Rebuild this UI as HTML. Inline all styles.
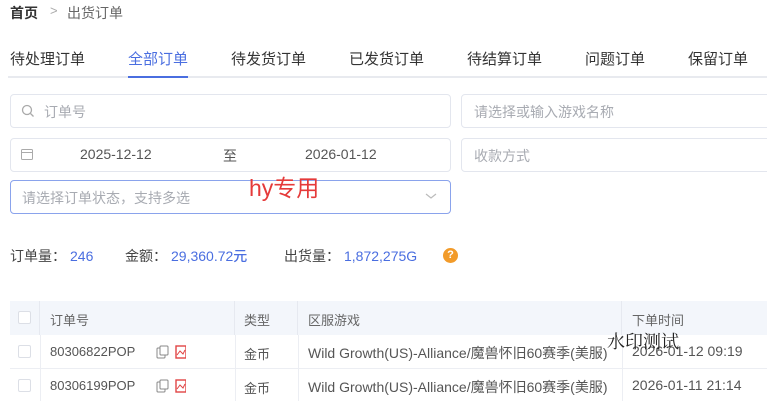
<!DOCTYPE html>
<html><head><meta charset="utf-8"><style>
*{margin:0;padding:0;box-sizing:border-box}
body{width:767px;height:401px;overflow:hidden;background:#fff;font-family:"Liberation Sans","Noto Sans CJK SC",sans-serif;color:#333;position:relative}
.a{position:absolute;white-space:nowrap}
.inp{position:absolute;border:1px solid #e3e6ee;border-radius:4px;height:34px;background:#fff}
.ph{color:#a8abb2;font-size:14px}
.tab{position:absolute;top:48px;font-size:15px;color:#333}
.th{position:absolute;top:301px;height:34px;background:#f3f6fb;border-right:1px solid #e6e9f0}
.td{font-size:13px;color:#555}
.cb{position:absolute;width:13px;height:13px;border:1px solid #dcdfe6;border-radius:2px;background:#fff}
.st{font-size:14px;color:#444;top:246px}
.st span{color:#4a6ee0;font-weight:500;margin-left:4px}
</style></head><body>
<div class="a" style="left:10px;top:3px;font-size:14px;font-weight:bold;color:#333">首页</div>
<div class="a" style="left:50px;top:3px;font-size:13px;color:#aaa">&gt;</div>
<div class="a" style="left:67px;top:3px;font-size:14px;color:#666">出货订单</div>

<div class="a" style="left:8px;top:76px;width:759px;height:2px;background:#e8eaef"></div>
<div class="tab" style="left:10px">待处理订单</div>
<div class="tab" style="left:128px;color:#4a6ee0">全部订单</div>
<div class="a" style="left:128px;top:76px;width:60px;height:2px;background:#4a6ee0"></div>
<div class="tab" style="left:231px">待发货订单</div>
<div class="tab" style="left:349px">已发货订单</div>
<div class="tab" style="left:467px">待结算订单</div>
<div class="tab" style="left:585px">问题订单</div>
<div class="tab" style="left:688px">保留订单</div>

<div class="inp" style="left:10px;top:94px;width:441px"></div>
<svg class="a" style="left:21px;top:104px" width="14" height="14"><circle cx="6" cy="6" r="4.5" fill="none" stroke="#aaa" stroke-width="1.3"/><line x1="9.5" y1="9.5" x2="12.5" y2="12.5" stroke="#aaa" stroke-width="1.3"/></svg>
<div class="a ph" style="left:44px;top:102px">订单号</div>
<div class="inp" style="left:461px;top:94px;width:320px"></div>
<div class="a ph" style="left:474px;top:102px">请选择或输入游戏名称</div>

<div class="inp" style="left:10px;top:138px;width:441px"></div>
<svg class="a" style="left:20px;top:147px" width="14" height="14"><rect x="1.5" y="2.5" width="11" height="10" rx="1" fill="none" stroke="#aaa"/><line x1="1.5" y1="5.5" x2="12.5" y2="5.5" stroke="#aaa"/></svg>
<div class="a" style="left:80px;top:146px;font-size:14px;color:#555">2025-12-12</div>
<div class="a" style="left:223px;top:146px;font-size:14px;color:#555">至</div>
<div class="a" style="left:305px;top:146px;font-size:14px;color:#555">2026-01-12</div>
<div class="inp" style="left:461px;top:138px;width:320px"></div>
<div class="a ph" style="left:474px;top:146px">收款方式</div>

<div class="inp" style="left:10px;top:180px;width:441px;border-color:#8aa3ec"></div>
<div class="a ph" style="left:22px;top:188px">请选择订单状态，支持多选</div>
<svg class="a" style="left:424px;top:191px" width="14" height="10"><polyline points="2,3 7,7 12,3" fill="none" stroke="#bbb" stroke-width="1.2"/></svg>
<div class="a" style="left:249px;top:169px;font-size:23px;color:#e53a3a">hy专用</div>

<div class="a st" style="left:10px">订单量：<span>246</span></div>
<div class="a st" style="left:125px">金额：<span>29,360.72元</span></div>
<div class="a st" style="left:284px">出货量：<span>1,872,275G</span></div>
<div class="a" style="left:443px;top:248px;width:15px;height:15px;border-radius:50%;background:#f29b2a;color:#fff;font-size:11px;font-weight:bold;text-align:center;line-height:15px">?</div>

<div class="th" style="left:10px;width:30px"></div>
<div class="th" style="left:40px;width:195px"></div>
<div class="th" style="left:235px;width:63px"></div>
<div class="th" style="left:298px;width:324px"></div>
<div class="th" style="left:622px;width:145px;border-right:0"></div>
<div class="cb" style="left:18px;top:311px"></div>
<div class="a td" style="left:50px;top:310px;color:#666">订单号</div>
<div class="a td" style="left:244px;top:310px;color:#666">类型</div>
<div class="a td" style="left:308px;top:310px;color:#666">区服游戏</div>
<div class="a td" style="left:632px;top:310px;color:#666">下单时间</div>

<div class="a" style="left:10px;top:368px;width:757px;height:1px;background:#eceef3"></div>
<div class="a" style="left:40px;top:335px;width:1px;height:66px;background:#eceef3"></div>
<div class="a" style="left:235px;top:335px;width:1px;height:66px;background:#eceef3"></div>
<div class="a" style="left:298px;top:335px;width:1px;height:66px;background:#eceef3"></div>
<div class="a" style="left:622px;top:335px;width:1px;height:66px;background:#eceef3"></div>

<div class="cb" style="left:18px;top:345px"></div>
<div class="a td" style="left:50px;top:344px">80306822POP</div>
<svg class="a" style="left:156px;top:345px" width="30" height="14"><rect x="1" y="3" width="8" height="10" rx="1" fill="#fff" stroke="#888"/><rect x="4" y="1" width="8" height="9" rx="1" fill="#fff" stroke="#888"/><rect x="20" y="1" width="10" height="12" fill="none" stroke="#e04545" stroke-width="1.4"/><polyline points="21,10 24,6 27,9 29,5" fill="none" stroke="#e04545"/></svg>
<div class="a td" style="left:244px;top:344px">金币</div>
<div class="a td" style="left:308px;top:343px;width:313px;overflow:hidden;font-size:14px">Wild Growth(US)-Alliance/魔兽怀旧60赛季(美服)</div>
<div class="a td" style="left:632px;top:343px;font-size:14px">2026-01-12 09:19</div>

<div class="cb" style="left:18px;top:379px"></div>
<div class="a td" style="left:50px;top:378px">80306199POP</div>
<svg class="a" style="left:156px;top:379px" width="30" height="14"><rect x="1" y="3" width="8" height="10" rx="1" fill="#fff" stroke="#888"/><rect x="4" y="1" width="8" height="9" rx="1" fill="#fff" stroke="#888"/><rect x="20" y="1" width="10" height="12" fill="none" stroke="#e04545" stroke-width="1.4"/><polyline points="21,10 24,6 27,9 29,5" fill="none" stroke="#e04545"/></svg>
<div class="a td" style="left:244px;top:378px">金币</div>
<div class="a td" style="left:308px;top:377px;width:313px;overflow:hidden;font-size:14px">Wild Growth(US)-Alliance/魔兽怀旧60赛季(美服)</div>
<div class="a td" style="left:632px;top:377px;font-size:14px">2026-01-11 21:14</div>

<div class="a" style="left:607px;top:328px;font-size:18px;color:#222;font-family:'Liberation Serif','Noto Serif CJK SC',serif">水印测试</div>
</body></html>
